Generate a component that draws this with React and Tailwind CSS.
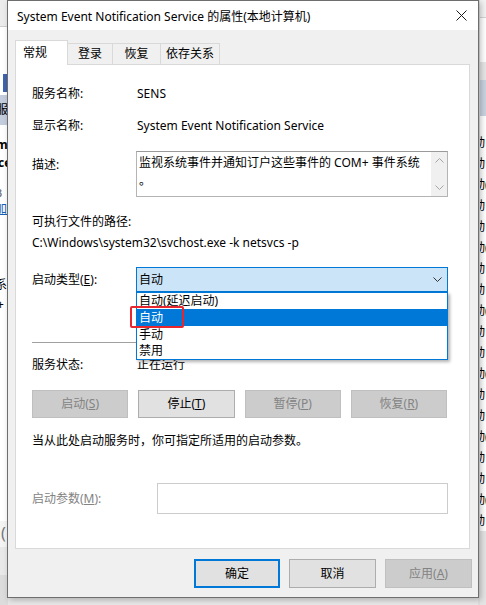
import React from 'react';

const font = "font-['Noto_Sans','Noto_Sans_CJK_SC',sans-serif]";

const Chevron = ({ up, className }) => (
    <svg width="9" height="5" viewBox="0 0 9 5" className={className}>
        <path d={up ? 'M0.5 4.5 L4.5 0.5 L8.5 4.5' : 'M0.5 0.5 L4.5 4.5 L8.5 0.5'} fill="none" stroke="currentColor" strokeWidth="1" />
    </svg>
);

const Btn = ({ children, disabled, primary, className = '' }) => (
    <div
        className={
            'flex items-center justify-center text-[12px] ' +
            (disabled
                ? 'bg-[#cccccc] border border-[#bfbfbf] text-[#838383] '
                : primary
                ? 'bg-[#e1e1e1] border-2 border-[#0078d7] text-black '
                : 'bg-[#e1e1e1] border border-[#adadad] text-black ') +
            className
        }
    >
        {children}
    </div>
);

const LeftBackdrop = () => (
    <div className="absolute left-0 top-0 w-[8px] h-full flex flex-col overflow-hidden bg-white">
        <div className="h-[27px] bg-[#ececec] border-b border-[#cfcfcf]" />
        <div className="h-[47px]" />
        <div className="h-[18px] ml-[3px] bg-[#3f63ad]" />
        <div className="h-[3px]" />
        <div className="h-[30px] bg-[#c3cddd] text-[12px] leading-[30px] -ml-[4px] text-black">服</div>
        <div className="h-[20px] mt-[10px] -ml-[4px] font-bold text-[12px] leading-[20px]">m</div>
        <div className="h-[16px] -ml-[2px] font-bold text-[12px] leading-[16px]">ce</div>
        <div className="h-[16px] mt-[14px] -ml-[5px] text-[11px] leading-[16px] text-[#555]">B</div>
        <div className="h-[16px] -ml-[5px] text-[12px] leading-[16px] text-[#1a5fb4] underline">加</div>
        <div className="h-[16px] mt-[60px] -ml-[5px] text-[12px] leading-[16px]">系</div>
        <div className="h-[16px] mt-[4px] -ml-[3px] text-[12px] leading-[16px]">+</div>
        <div className="flex-1" />
        <div className="h-[26px] text-[16px] leading-[24px] text-[#777] pl-[1px] bg-[#f4f4f4]">(</div>
        <div className="h-[28px] bg-[#e9e9e9]" />
        <div className="h-[30px] bg-[#dcdcdc]" />
    </div>
);

const RightBackdrop = () => (
    <div className="absolute right-0 top-0 w-[8px] h-full flex flex-col overflow-hidden bg-white border-l-2 border-[#dedede]">
        <div className="h-[18px] bg-[#f3f3f3] border-b border-[#d4d4d4]" />
        <div className="h-[44px]" />
        <div className="h-[18px] bg-[#e6e6e6]" />
        <div className="h-[36px] bg-[#c9d2df]" />
        <div className="flex flex-col pt-[16px]">
            {Array.from({ length: 19 }).map((_, i) => (
                <div key={i} className="h-[21px] text-[12px] leading-[21px] -ml-[7px] whitespace-nowrap">
                    {i % 3 === 2 ? '动(' : '动'}
                </div>
            ))}
        </div>
        <div className="flex-1 bg-[#e4e4e4]" />
    </div>
);

export default function App() {
    return (
        <div className={'relative w-[486px] h-[605px] overflow-hidden bg-[#e8e8e8] text-black ' + font}>
            <LeftBackdrop />
            <RightBackdrop />

            <div className="absolute left-[7px] top-0 w-[472px] h-[598px] border border-[#6e6e6e] bg-[#f0f0f0] flex flex-col shadow-[2px_2px_6px_rgba(0,0,0,0.25)]">
                {/* title bar */}
                <div className="h-[29px] bg-white flex items-center pl-[9px] pr-[10px]">
                    <span className="text-[12px] leading-none pt-[2px]">System Event Notification Service 的属性(本地计算机)</span>
                    <svg width="11" height="11" viewBox="0 0 11 11" className="ml-auto mr-[1px]">
                        <path d="M0.5 0.5 L10.5 10.5 M10.5 0.5 L0.5 10.5" stroke="#1a1a1a" strokeWidth="1" />
                    </svg>
                </div>

                <div className="pl-[7px] pt-[10px]">
                    {/* tabs */}
                    <div className="flex items-end h-[24px] text-[12px]">
                        <div className="relative z-10 w-[53px] h-[25px] -mb-px bg-white border border-b-0 border-[#d9d9d9] flex items-center pl-[7px]">常规</div>
                        <div className="w-[45px] h-[21px] border border-l-0 border-b-0 border-[#d9d9d9] flex items-center justify-center">登录</div>
                        <div className="w-[48px] h-[21px] border border-l-0 border-b-0 border-[#d9d9d9] flex items-center justify-center">恢复</div>
                        <div className="w-[59px] h-[21px] border border-l-0 border-b-0 border-[#d9d9d9] flex items-center justify-center">依存关系</div>
                    </div>

                    {/* panel */}
                    <div className="w-[455px] h-[485px] bg-white border border-[#d9d9d9] pl-[16px] flex flex-col text-[12px]">
                        <div className="mt-[19px] h-[20px] flex items-center">
                            <span className="w-[105px]">服务名称:</span>
                            <span>SENS</span>
                        </div>
                        <div className="mt-[12px] h-[20px] flex items-center">
                            <span className="w-[105px]">显示名称:</span>
                            <span>System Event Notification Service</span>
                        </div>
                        <div className="mt-[15px] flex items-start">
                            <span className="w-[104px] pt-[4px] leading-[20px]">描述:</span>
                            <div className="w-[312px] h-[46px] flex border border-[#b4b4b4] border-t-[#9a9a9a]">
                                <div className="flex-1 pl-[2px] leading-[18px] pt-[2px]">
                                    监视系统事件并通知订户这些事件的 COM+ 事件系统
                                    <br />。
                                </div>
                                <div className="w-[16px] bg-[#f0f0f0] flex flex-col items-center justify-between py-[6px] text-[#a6a6a6]">
                                    <Chevron up />
                                    <Chevron />
                                </div>
                            </div>
                        </div>
                        <div className="mt-[15px] h-[20px] flex items-center">可执行文件的路径:</div>
                        <div className="mt-[1px] h-[20px] flex items-center">C:\Windows\system32\svchost.exe -k netsvcs -p</div>

                        <div className="mt-[14px] h-[25px] flex items-center">
                            <span className="w-[104px]">启动类型(<span className="underline">E</span>):</span>
                            <div className="relative w-[312px] h-[25px]">
                                <div className="h-full bg-[#cce4f7] border border-[#0078d7] flex items-center pl-[2px] pr-[5px]">
                                    <span>自动</span>
                                    <Chevron className="ml-auto text-[#333]" />
                                </div>
                                <div className="absolute z-20 left-0 top-[25px] w-[312px] h-[68px] bg-white border border-[#0078d7] shadow-[2px_2px_3px_rgba(0,0,0,0.3)] flex flex-col">
                                    <div className="h-[16px] leading-[16px] pl-[2px]">自动(延迟启动)</div>
                                    <div className="h-[17px] leading-[17px] pl-[2px] bg-[#0078d7] text-white">自动</div>
                                    <div className="h-[17px] leading-[17px] pl-[2px]">手动</div>
                                    <div className="h-[16px] leading-[16px] pl-[2px]">禁用</div>
                                    <div className="absolute -left-[7px] top-[13px] w-[54px] h-[22px] border-2 border-[#e8262d] rounded-[2px]" />
                                </div>
                            </div>
                        </div>

                        <div className="mt-[50px] h-px w-[415px] bg-[#a0a0a0]" />

                        <div className="mt-[12px] h-[20px] flex items-center">
                            <span className="w-[105px]">服务状态:</span>
                            <span>正在运行</span>
                        </div>

                        <div className="mt-[15px] w-[415px] h-[28px] grid grid-cols-4 gap-[10px]">
                            <Btn disabled>启动(<span className="underline">S</span>)</Btn>
                            <Btn>停止(<span className="underline">T</span>)</Btn>
                            <Btn disabled>暂停(<span className="underline">P</span>)</Btn>
                            <Btn disabled>恢复(<span className="underline">R</span>)</Btn>
                        </div>

                        <div className="mt-[13px] h-[20px] flex items-center">当从此处启动服务时，你可指定所适用的启动参数。</div>

                        <div className="mt-[32px] h-[31px] flex items-center">
                            <span className="w-[125px] text-[#838383]">启动参数(<span className="underline">M</span>):</span>
                            <div className="w-[291px] h-[31px] border border-[#cccccc] bg-white" />
                        </div>
                    </div>
                </div>

                {/* bottom buttons */}
                <div className="mt-[10px] flex justify-end gap-[9px] pr-[6px]">
                    <Btn primary className="w-[86px] h-[29px]">确定</Btn>
                    <Btn className="w-[87px] h-[29px]">取消</Btn>
                    <Btn disabled className="w-[87px] h-[29px]">应用(<span className="underline">A</span>)</Btn>
                </div>
            </div>
        </div>
    );
}
